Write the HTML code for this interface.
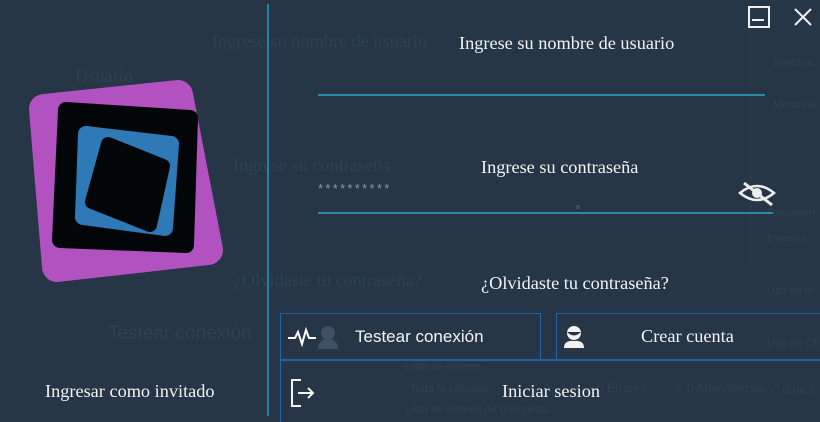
<!DOCTYPE html>
<html><head><meta charset="utf-8"><style>
body{margin:0;width:820px;height:422px;background:#263646;overflow:hidden;position:relative;font-family:"Liberation Serif",serif;}
.a{position:absolute;white-space:nowrap}
.s{font-family:"Liberation Serif",serif;font-size:18.3px;color:#f2f2f2}
.g{color:#2e4254}
.sans{font-family:"Liberation Sans",sans-serif}
</style></head><body>
<!-- ghost background -->
<div class="a s g" style="left:212px;top:31px">Ingrese su nombre de usuario</div>
<div class="a s g" style="left:75px;top:66px">Usuario</div>
<div class="a s g" style="left:233px;top:155px">Ingrese su contraseña</div>
<div class="a s g" style="left:234px;top:270px">¿Olvidaste tu contraseña?</div>
<div class="a sans g" style="left:108px;top:323px;font-size:19px">Testear conexión</div>
<div class="a sans g" style="left:405px;top:361px;font-size:11px">Lista de errores</div>
<div class="a sans g" style="left:410px;top:383px;font-size:11px">Toda la solución</div>
<div class="a sans g" style="left:405px;top:404px;font-size:11px">Lista de errores de búsqueda</div>
<div class="a sans g" style="left:597px;top:381px;font-size:12px">0 Errores</div>
<div class="a sans g" style="left:673px;top:381px;font-size:12px">⚠ 0 Advertencias</div>
<div class="a sans g" style="left:767px;top:381px;font-size:12px">ⓘ 0 de 2</div>
<div class="a sans g" style="left:767px;top:233px;font-size:11px">Eventos</div>
<div class="a sans g" style="left:767px;top:285px;font-size:11px">Uso de m</div>
<div class="a sans g" style="left:767px;top:337px;font-size:11px">Uso de CP</div>
<div class="a sans g" style="left:768px;top:207px;font-size:11px">Resumen</div>
<div class="a sans g" style="left:773px;top:57px;font-size:11px">Eventos</div>
<div class="a sans g" style="left:773px;top:99px;font-size:11px">Memoria</div>
<div class="a" style="left:318px;top:181px;color:#8a97a3;font-size:13px;letter-spacing:2.3px;font-family:'Liberation Sans',sans-serif">**********</div>
<div class="a" style="left:750px;top:0;width:1px;height:265px;background:#2b3c4c"></div>
<div class="a" style="left:576px;top:205px;width:4px;height:4px;background:#3d5060"></div>
<!-- vertical line -->
<div class="a" style="left:267px;top:4px;width:2px;height:412px;background:#1b87a6"></div>
<!-- logo -->
<svg class="a" style="left:0;top:0" width="260" height="300">
<polygon points="44,109 178,95 208,250 57,267" fill="#b152c0" stroke="#b152c0" stroke-width="30" stroke-linejoin="round"/>
<polygon points="66,110 190,118 186,245 60,240" fill="#030608" stroke="#030608" stroke-width="16" stroke-linejoin="round"/>
<polygon points="86,134 171,144 165,228 83,217" fill="#2f79b6" stroke="#2f79b6" stroke-width="16" stroke-linejoin="round"/>
<polygon points="108,144 163,166 150,225 92,202" fill="#030608" stroke="#030608" stroke-width="14" stroke-linejoin="round"/>
</svg>
<!-- main texts -->
<div class="a s" style="left:459px;top:33px">Ingrese su nombre de usuario</div>
<div class="a" style="left:318px;top:94px;width:447px;height:2px;background:#2a8ba6"></div>
<div class="a s" style="left:481px;top:157px">Ingrese su contraseña</div>
<div class="a" style="left:318px;top:212px;width:455px;height:2px;background:#2a8ba6"></div>
<svg class="a" style="left:738px;top:181px" width="38" height="26"><path d="M2,12 Q19,-2 36,12 Q19,26 2,12Z" fill="none" stroke="#eee" stroke-width="2.5"/><circle cx="19" cy="12" r="5" fill="#eee"/><path d="M6,2 L34,24" stroke="#eee" stroke-width="3"/></svg>
<div class="a s" style="left:481px;top:273px">¿Olvidaste tu contraseña?</div>
<!-- window buttons -->
<div class="a" style="left:748px;top:6px;width:18px;height:18px;border:2px solid #f0f0f0"></div>
<div class="a" style="left:752px;top:19px;width:12px;height:2px;background:#f0f0f0"></div>
<svg class="a" style="left:793px;top:7px" width="20" height="20"><path d="M2,2L18,18M18,2L2,18" stroke="#f0f0f0" stroke-width="2"/></svg>
<!-- buttons -->
<div class="a" style="left:280px;top:313px;width:259px;height:46px;border:1px solid #1d65a8;border-bottom:none"></div>
<div class="a" style="left:556px;top:313px;width:270px;height:46px;border:1px solid #1d65a8;border-bottom:none"></div>
<div class="a" style="left:280px;top:359px;width:540px;height:2px;background:#1d65a8"></div>
<div class="a" style="left:280px;top:360px;width:1px;height:62px;background:#1d65a8"></div>
<svg class="a" style="left:287px;top:326px" width="30" height="22"><path d="M1,12 H8 L11,6 L15,18 L19,4 L22,12 H29" fill="none" stroke="#fff" stroke-width="2"/></svg>
<svg class="a" style="left:316px;top:325px" width="24" height="24"><circle cx="12" cy="8" r="7" fill="#3e5264"/><path d="M2,24 Q2,14 12,14 Q22,14 22,24Z" fill="#3e5264"/></svg>
<div class="a sans" style="left:355px;top:327px;font-size:17px;color:#f2f2f2">Testear conexión</div>
<svg class="a" style="left:562px;top:325px" width="24" height="24"><circle cx="12" cy="8" r="7" fill="#f2f2f2"/><path d="M5,7 Q12,14 19,7" fill="#263646"/><path d="M2,23 Q2,15 12,16 Q22,15 22,23Z" fill="#f2f2f2"/></svg>
<div class="a s" style="left:641px;top:326px">Crear cuenta</div>
<svg class="a" style="left:289px;top:378px" width="28" height="30"><path d="M12,2 H3 V28 H12" fill="none" stroke="#f2f2f2" stroke-width="2"/><path d="M9,15 H24 M19,10 L24,15 L19,20" fill="none" stroke="#f2f2f2" stroke-width="2"/></svg>
<div class="a s" style="left:502px;top:381px">Iniciar sesion</div>
<div class="a s" style="left:45px;top:381px">Ingresar como invitado</div>
</body></html>
